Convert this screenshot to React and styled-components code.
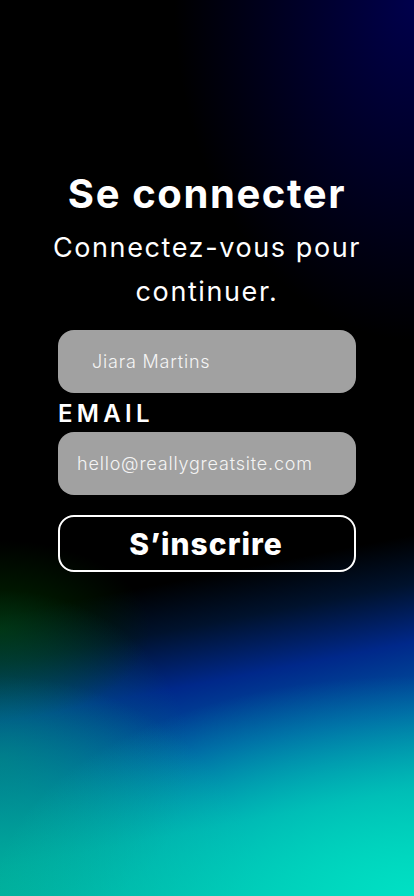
import React from "react";
import styled, { createGlobalStyle } from "styled-components";

const GlobalStyle = createGlobalStyle`
  * { box-sizing: border-box; }
  body {
    margin: 0;
    background: #000;
    font-family: Inter, 'Liberation Sans', sans-serif;
  }
`;

const Screen = styled.div`
  width: 414px;
  height: 896px;
  overflow: hidden;
  display: flex;
  flex-direction: column;
  align-items: center;
  padding-top: 170px;
  background:
    radial-gradient(ellipse 420px 220px at 100% 100%, #00e0c4 0%, rgba(0, 224, 196, 0) 100%),
    radial-gradient(ellipse 260px 220px at 0% 896px, rgba(0, 180, 155, 0.85) 0%, rgba(0, 180, 155, 0) 100%),
    radial-gradient(ellipse 190px 170px at 0% 760px, rgba(0, 120, 125, 0.7) 0%, rgba(0, 120, 125, 0) 100%),
    radial-gradient(ellipse 150px 90px at 0% 630px, rgba(0, 45, 0, 0.9) 0%, rgba(0, 45, 0, 0) 100%),
    linear-gradient(169deg,
      rgba(0, 0, 0, 0) 0%,
      rgba(0, 0, 0, 0) 63%,
      rgba(0, 20, 50, 0.9) 68%,
      #00288a 74%,
      #0058a0 81%,
      #0098a8 89%,
      #00bca8 100%),
    radial-gradient(ellipse 240px 340px at 100% 0%, #00004c 0%, rgba(0, 0, 40, 0) 100%),
    #000;
`;

const Title = styled.h1`
  margin: 0;
  color: #fff;
  font-size: 40px;
  font-weight: 700;
  letter-spacing: 1.6px;
  line-height: 48px;
  text-align: center;
`;

const Subtitle = styled.p`
  margin: 8px 0 0;
  color: #fff;
  font-size: 27px;
  font-weight: 400;
  letter-spacing: 1.6px;
  line-height: 44px;
  text-align: center;
  width: 340px;
`;

const Form = styled.form`
  width: 298px;
  display: flex;
  flex-direction: column;
  margin-top: 16px;
`;

const Field = styled.div`
  height: 63px;
  border-radius: 16px;
  background: rgba(255, 255, 255, 0.63);
  display: flex;
  align-items: center;
  padding-left: ${props => props.$indent}px;
  color: #f4f4f4;
  font-size: 18px;
  font-weight: 300;
  letter-spacing: 0.8px;
`;

const Label = styled.label`
  color: #fff;
  font-size: 24px;
  font-weight: 600;
  letter-spacing: 4.3px;
  line-height: 37px;
  margin-top: 2px;
  height: 37px;
`;

const SubmitButton = styled.button`
  margin-top: 20px;
  height: 57px;
  border: 2.5px solid #fff;
  border-radius: 16px;
  background: transparent;
  color: #fff;
  font-family: inherit;
  font-size: 30px;
  font-weight: 800;
  letter-spacing: 1px;
  padding-right: 8px;
  cursor: pointer;
`;

export default function App() {
  return (
    <>
      <GlobalStyle />
      <Screen>
        <Title>Se connecter</Title>
        <Subtitle>Connectez-vous pour continuer.</Subtitle>
        <Form onSubmit={e => e.preventDefault()}>
          <Field $indent={34}>Jiara Martins</Field>
          <Label>EMAIL</Label>
          <Field $indent={19}>hello@reallygreatsite.com</Field>
          <SubmitButton type="submit">S’inscrire</SubmitButton>
        </Form>
      </Screen>
    </>
  );
}
